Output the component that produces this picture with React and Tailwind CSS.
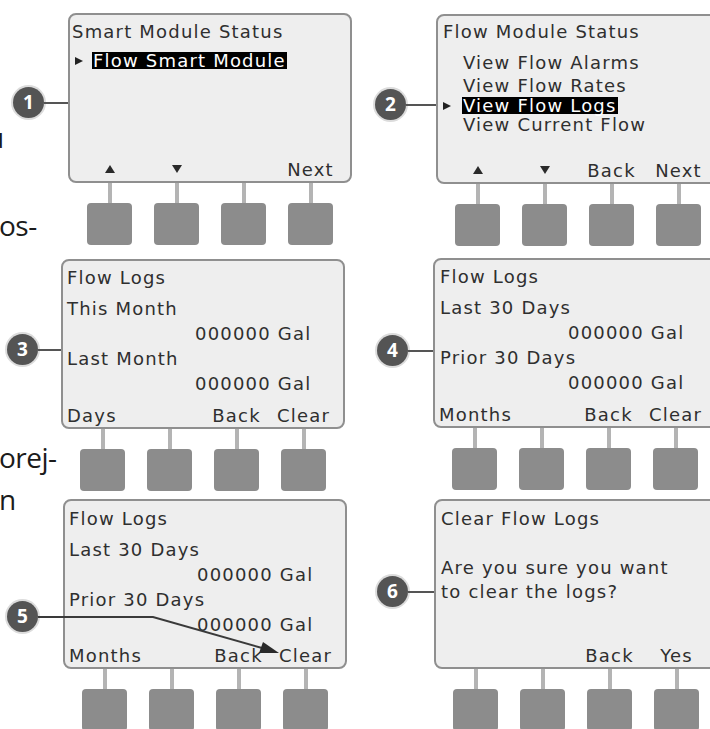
import React from 'react';

// screen text uses a Verdana-like face, the side column a humanist sans
const screenFont = "font-['DejaVu_Sans',Verdana,sans-serif] text-[18px] tracking-[1.2px] text-[#2f2f2f]";

function Up() {
  return (
    <svg width="10" height="8" viewBox="0 0 10 8" className="mb-[2px]">
      <polygon points="5,0 10,8 0,8" fill="#2a2a2a" />
    </svg>
  );
}

function Down() {
  return (
    <svg width="10" height="8" viewBox="0 0 10 8" className="mb-[2px]">
      <polygon points="0,0 10,0 5,8" fill="#2a2a2a" />
    </svg>
  );
}

function Pointer() {
  return (
    <svg width="8" height="8" viewBox="0 0 8 8" className="shrink-0">
      <polygon points="0,0 8,4 0,8" fill="#222" />
    </svg>
  );
}

function Badge({ n }) {
  return (
    <div className="w-[31px] h-[31px] shrink-0 rounded-full bg-[#545454] shadow-[0_0_0_2px_#dcdcdc] flex items-center justify-center text-white font-['Open_Sans',sans-serif] font-bold text-[19px] leading-none">
      {n}
    </div>
  );
}

function Connector({ n, width, badgeLeft, badgeTop, line = true }) {
  return (
    <div className="shrink-0 flex items-center" style={{ width }}>
      <div className="flex items-center w-full" style={{ paddingLeft: badgeLeft, marginTop: badgeTop }}>
        <Badge n={n} />
        {line && <div className="flex-1 h-[2px] bg-[#555]" />}
      </div>
    </div>
  );
}

function LabelRow({ labels }) {
  const [first, ...rest] = labels;
  const isArrow = first === 'up';
  return (
    <div className="mt-auto flex items-center h-[22px] leading-[22px] whitespace-nowrap">
      <div className={isArrow ? 'w-[62px] pl-[17px] flex justify-center' : 'w-[62px] pl-[4px] flex justify-start'}>
        {first === 'up' ? <Up /> : first}
      </div>
      <div className="flex items-center gap-[22px] ml-[22px]">
        {rest.map((l, i) => (
          <div key={i} className="w-[45px] flex justify-center">
            {l === 'down' ? <Down /> : l}
          </div>
        ))}
      </div>
    </div>
  );
}

function Keys() {
  return (
    <div className="flex gap-[22px] pl-[19px]">
      {[0, 1, 2, 3].map((k) => (
        <div key={k} className="w-[45px] flex flex-col items-center">
          <div className="w-[4px] h-[20px] bg-[#b4b4b4]" />
          <div className="w-[45px] h-[42px] rounded-[4px] bg-[#8c8c8c]" />
        </div>
      ))}
    </div>
  );
}

function Screen({ labels, children }) {
  return (
    <div className="flex flex-col shrink-0">
      <div className={`relative w-[284px] h-[170px] rounded-[8px] border-2 border-[#8f8f8f] bg-[#eeeeee] flex flex-col ${screenFont}`}>
        {children}
        <LabelRow labels={labels} />
      </div>
      <Keys />
    </div>
  );
}

function LogLines({ first, second }) {
  return (
    <div className="mt-[6px] leading-[25px] whitespace-nowrap">
      <div>{first}</div>
      <div className="pl-[128px]">000000 Gal</div>
      <div>{second}</div>
      <div className="pl-[128px]">000000 Gal</div>
    </div>
  );
}

export default function App() {
  return (
    <div className="w-[710px] h-[729px] bg-white overflow-hidden grid">
      {/* cut-off words of the neighbouring text column */}
      <div className="col-start-1 row-start-1 flex flex-col font-['Open_Sans',sans-serif] text-[28px] leading-[28px] tracking-[-0.5px] text-[#1b1b1b]">
        <div className="mt-[123px] ml-[-13px]">u</div>
        <div className="mt-[60px] ml-[-1px]">os-</div>
        <div className="mt-[204px] ml-[-1px]">orej-</div>
        <div className="mt-[14px] ml-[-1px]">n</div>
      </div>

      <div className="col-start-1 row-start-1 grid grid-cols-[355px_1fr] pt-[13px]">
        {/* row 1 */}
        <div className="flex items-start">
          <Connector n="1" width={68} badgeLeft={13} badgeTop={74} />
          <Screen labels={['up', 'down', '', 'Next']}>
            <div className="pl-[2px] pt-[5px] leading-[24px] whitespace-nowrap">Smart Module Status</div>
            <div className="mt-[8px] flex items-center leading-[22px] whitespace-nowrap">
              <div className="ml-[5px]"><Pointer /></div>
              <span className="ml-[9px] bg-black text-white leading-[17px] px-[1px]">Flow Smart Module</span>
            </div>
          </Screen>
        </div>
        <div className="flex items-start mt-[1px]">
          <Connector n="2" width={81} badgeLeft={20} badgeTop={75} />
          <Screen labels={['up', 'down', 'Back', 'Next']}>
            <div className="pl-[5px] pt-[4px] leading-[24px] whitespace-nowrap">Flow Module Status</div>
            <div className="mt-[8px] leading-[22.5px] whitespace-nowrap">
              <div className="pl-[25px]">View Flow Alarms</div>
              <div className="pl-[25px]">View Flow Rates</div>
              <div className="flex items-center">
                <div className="ml-[5px]"><Pointer /></div>
                <span className="ml-[11px] bg-black text-white leading-[17px] px-[1px]">View Flow Logs</span>
              </div>
              <div className="pl-[25px]">View Current Flow</div>
            </div>
          </Screen>
        </div>

        {/* row 2 */}
        <div className="flex items-start mt-[13px]">
          <Connector n="3" width={61} badgeLeft={7} badgeTop={75} />
          <Screen labels={['Days', '', 'Back', 'Clear']}>
            <div className="pl-[4px] pt-[5px] leading-[24px]">
              <div>Flow Logs</div>
              <LogLines first="This Month" second="Last Month" />
            </div>
          </Screen>
        </div>
        <div className="flex items-start mt-[12px]">
          <Connector n="4" width={78} badgeLeft={22} badgeTop={77} />
          <Screen labels={['Months', '', 'Back', 'Clear']}>
            <div className="pl-[5px] pt-[5px] leading-[24px]">
              <div>Flow Logs</div>
              <LogLines first="Last 30 Days" second="Prior 30 Days" />
            </div>
          </Screen>
        </div>

        {/* row 3 */}
        <div className="flex items-start mt-[8px] relative">
          <Connector n="5" width={63} badgeLeft={7} badgeTop={102} line={false} />
          <Screen labels={['Months', '', 'Back', 'Clear']}>
            <div className="pl-[4px] pt-[6px] leading-[24px]">
              <div>Flow Logs</div>
              <LogLines first="Last 30 Days" second="Prior 30 Days" />
            </div>
          </Screen>
          <svg width="290" height="170" className="absolute left-0 top-0 pointer-events-none">
            <polyline points="38,118 153,118 262,149" fill="none" stroke="#3a3a3a" strokeWidth="2" />
            <polygon points="279,154 263,143 259,154" fill="#2a2a2a" />
          </svg>
        </div>
        <div className="flex items-start mt-[8px]">
          <Connector n="6" width={79} badgeLeft={22} badgeTop={77} />
          <Screen labels={['', '', 'Back', 'Yes']}>
            <div className="pl-[5px] pt-[6px] leading-[24px] whitespace-nowrap">
              <div>Clear Flow Logs</div>
              <div className="mt-[25px]">Are you sure you want</div>
              <div>to clear the logs?</div>
            </div>
          </Screen>
        </div>
      </div>
    </div>
  );
}
